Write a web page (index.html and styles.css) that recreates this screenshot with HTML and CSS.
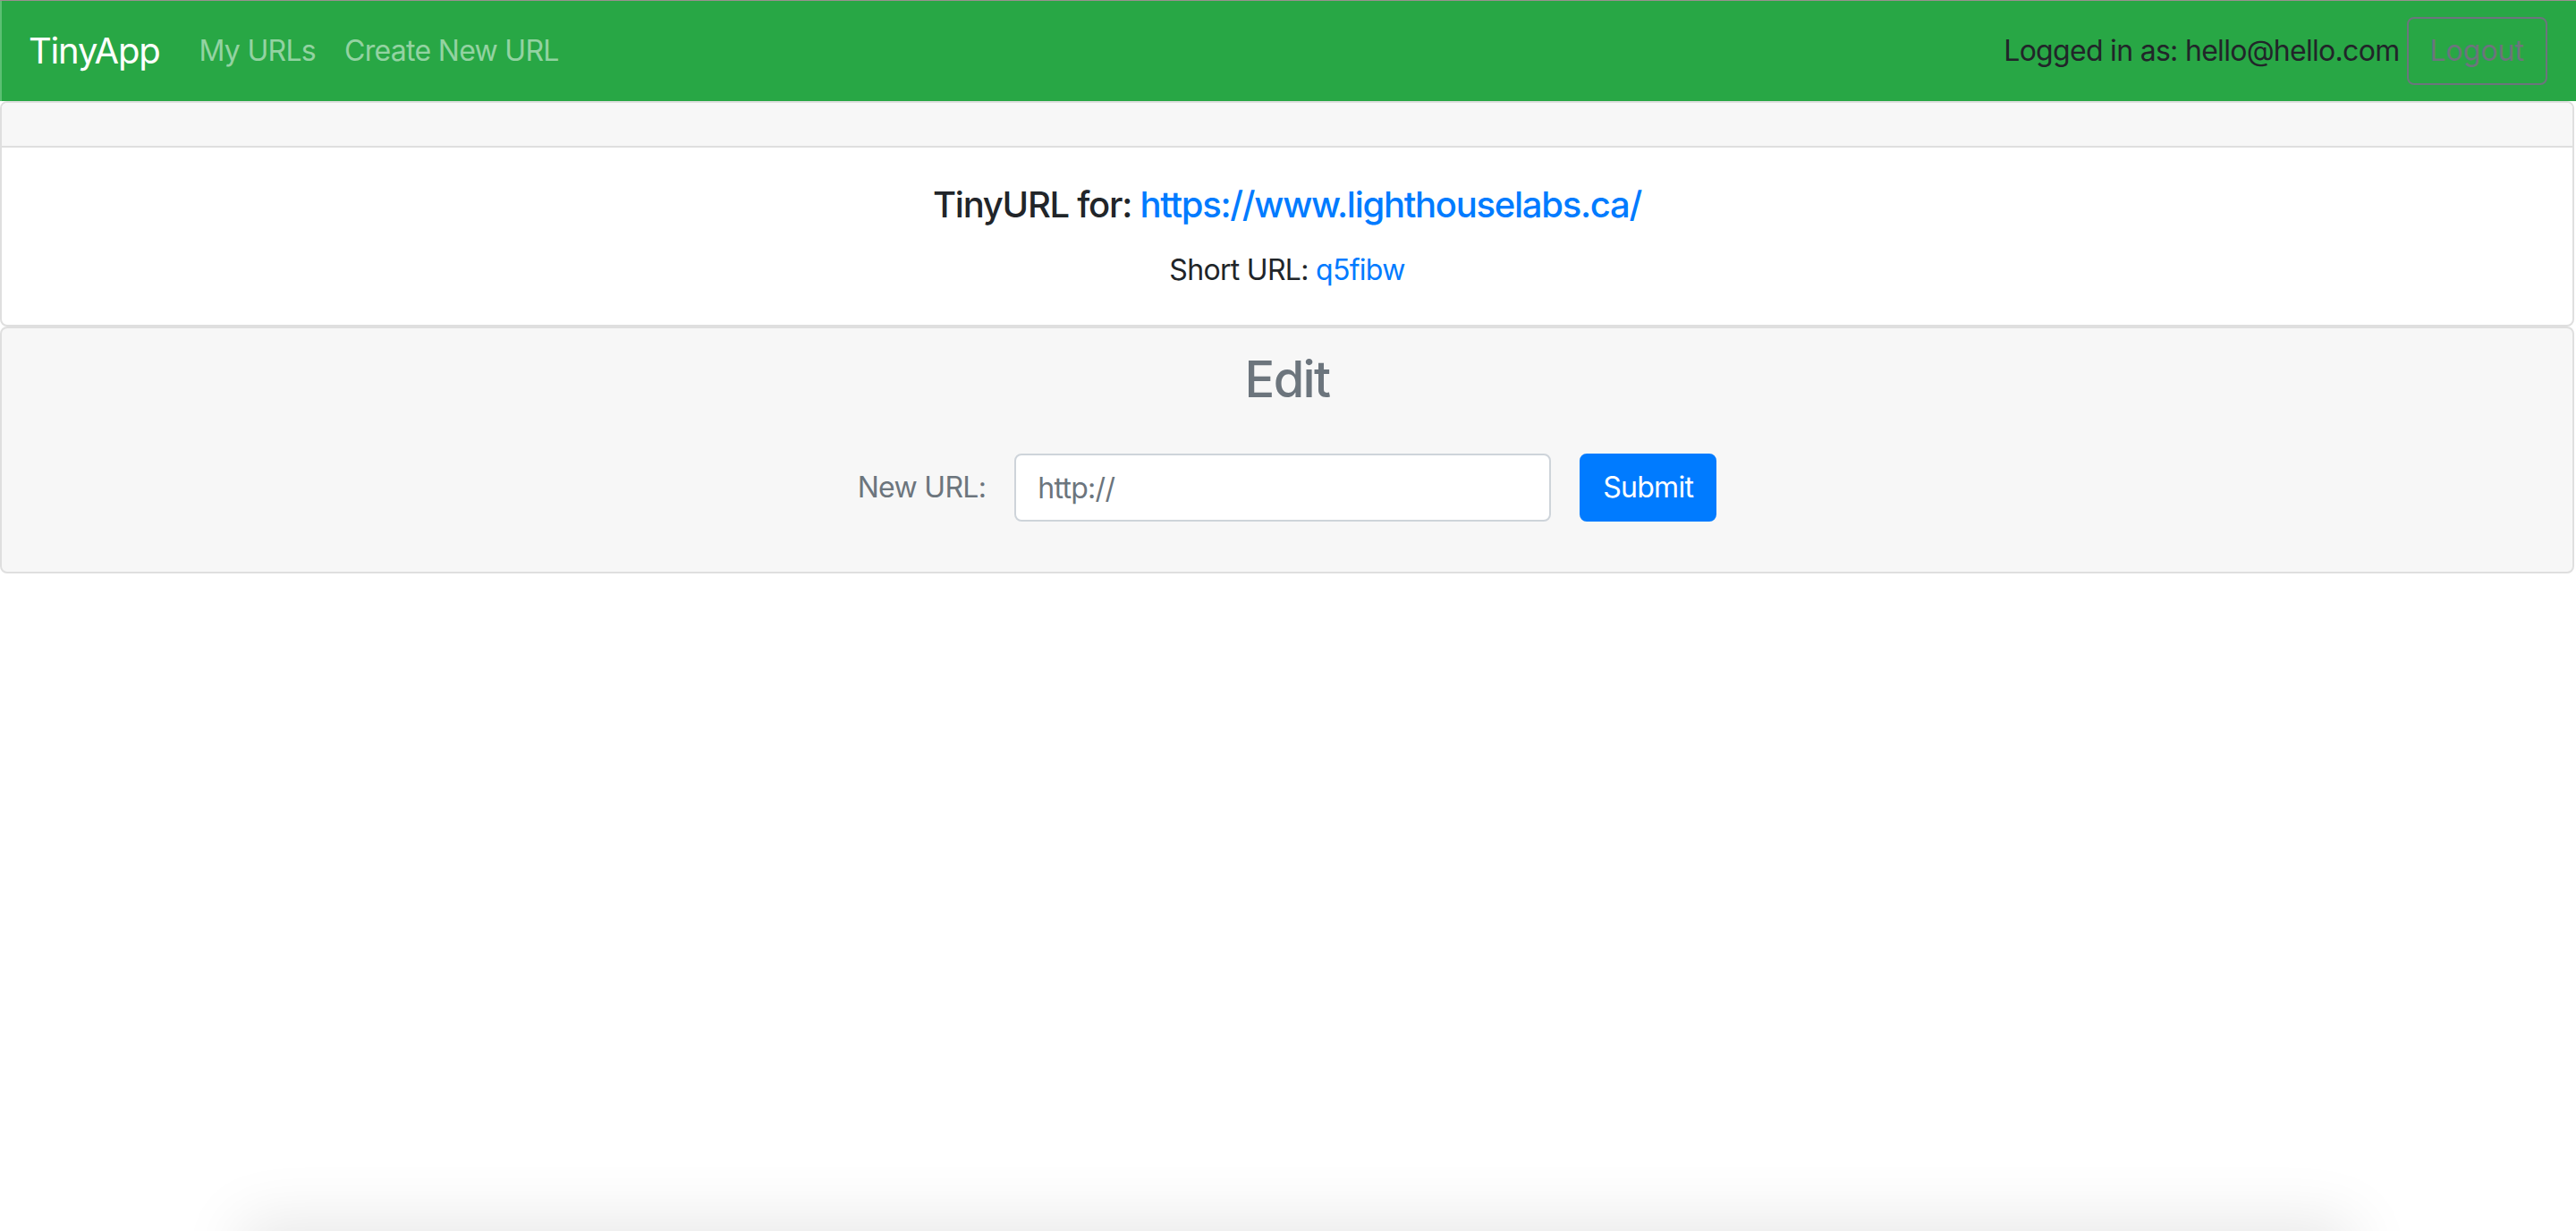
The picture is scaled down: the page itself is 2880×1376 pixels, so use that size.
FILE: index.html
```html
<!DOCTYPE html>
<html lang="en">
<head>
<meta charset="utf-8">
<title>TinyApp</title>
<link rel="stylesheet" href="styles.css">
</head>
<body>
<nav class="navbar">
  <a class="brand" href="#">TinyApp</a>
  <ul class="nav-links">
    <li><a href="#">My URLs</a></li>
    <li><a href="#">Create New URL</a></li>
  </ul>
  <div class="user">
    <span class="login-text">Logged in as: hello@hello.com</span>
    <button class="btn-logout" type="button">Logout</button>
  </div>
</nav>
<main>
  <section class="card">
    <div class="card-header"></div>
    <div class="card-body">
      <h5 class="card-title">TinyURL for: <a href="#">https://www.lighthouselabs.ca/</a></h5>
      <p class="card-text">Short URL: <a href="#">q5fibw</a></p>
    </div>
  </section>
  <section class="card card-edit">
    <h2 class="edit-title">Edit</h2>
    <form class="edit-form">
      <label class="edit-label" for="newurl">New URL:</label>
      <input class="edit-input" id="newurl" type="text" placeholder="http://">
      <button class="btn-submit" type="submit">Submit</button>
    </form>
  </section>
</main>
<div class="dock-shadow"></div>
</body>
</html>
```

FILE: styles.css
```css
* { box-sizing: border-box; }
html, body { margin: 0; padding: 0; background: #fff; }
body {
  font-family: "Inter", "Roboto", "Liberation Sans", sans-serif;
  font-size: 32px;
  line-height: 1.5;
  letter-spacing: -0.022em;
  color: #212529;
  overflow: hidden;
  height: 1376px;
}
a { text-decoration: none; }

.navbar {
  display: flex;
  align-items: center;
  height: 113px;
  padding: 16px 32px;
  background: #28a745;
  border-top: 1px solid #9a9090;
  box-shadow: inset 2px 0 0 #5cbf73;
}
.brand {
  font-size: 40px;
  line-height: 60px;
  padding: 10px 0;
  color: #fff;
  margin-right: 44px;
  letter-spacing: -0.03em;
}
.nav-links {
  display: flex;
  list-style: none;
  margin: 0;
  padding: 0;
  gap: 32px;
}
.nav-links a {
  color: rgba(255, 255, 255, 0.5);
  line-height: 48px;
}
.user {
  margin-left: auto;
  display: flex;
  align-items: center;
  gap: 8px;
}
.login-text { color: #212529; }
.btn-logout {
  font-family: inherit;
  font-size: 32px;
  letter-spacing: 0;
  line-height: 48px;
  padding: 12px 24px;
  color: #6c757d;
  background: transparent;
  border: 2px solid #6c757d;
  border-radius: 8px;
}

.card {
  border: 2px solid #dfdfdf;
  border-radius: 8px;
  background: #fff;
  width: 2878px;
}
.card-header {
  height: 50px;
  background: #f7f7f7;
  border-bottom: 2px solid #dfdfdf;
  border-radius: 6px 6px 0 0;
}
.card-body {
  padding: 40px 40px 37px;
  text-align: center;
}
.card-title {
  margin: 0 0 25px;
  font-size: 40px;
  font-weight: 500;
  line-height: 1.2;
  letter-spacing: -0.032em;
}
.card-text { margin: 0; }
.card a { color: #007bff; }

.card-edit {
  background: #f7f7f7;
  padding: 24px 40px 24px;
  text-align: center;
}
.edit-title {
  margin: 0 0 49px;
  font-size: 56px;
  font-weight: 500;
  line-height: 1.2;
  letter-spacing: -0.03em;
  color: #6c757d;
}
.edit-form {
  display: flex;
  justify-content: center;
  align-items: center;
  gap: 32px;
  margin-bottom: 32px;
}
.edit-label { color: #6c757d; }
.edit-input {
  width: 600px;
  height: 76px;
  padding: 12px 24px;
  font-family: inherit;
  font-size: 32px;
  letter-spacing: inherit;
  color: #495057;
  background: #fff;
  border: 2px solid #ced4da;
  border-radius: 8px;
}
.edit-input::placeholder { color: #6c757d; }
.btn-submit {
  font-family: inherit;
  font-size: 32px;
  letter-spacing: inherit;
  line-height: 48px;
  padding: 12px 24px;
  color: #fff;
  background: #007bff;
  border: 2px solid #007bff;
  border-radius: 8px;
}

.dock-shadow {
  position: fixed;
  left: 280px;
  right: 260px;
  bottom: -60px;
  height: 60px;
  box-shadow: 0 0 70px 10px rgba(0, 0, 0, 0.1);
}
```
